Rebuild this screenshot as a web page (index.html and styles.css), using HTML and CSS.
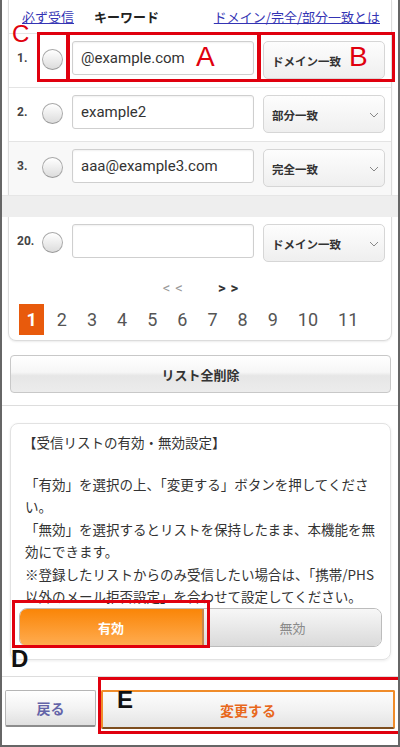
FILE: index.html
```html
<!DOCTYPE html>
<html lang="ja">
<head>
<meta charset="UTF-8">
<meta name="viewport" content="width=device-width, initial-scale=1">
<title>受信リスト設定</title>
<link rel="stylesheet" href="styles.css">
</head>
<body>
<div class="page">
  <div class="list-box">
    <div class="list-head">
      <a href="#" class="link">必ず受信</a>
      <span class="head-key">キーワード</span>
      <a href="#" class="link link-right">ドメイン/完全/部分一致とは</a>
    </div>

    <div class="row">
      <span class="num">1.</span>
      <span class="radio"></span>
      <input class="field" type="text" value="@example.com">
      <div class="select">ドメイン一致</div>
    </div>
    <div class="row">
      <span class="num">2.</span>
      <span class="radio"></span>
      <input class="field" type="text" value="example2">
      <div class="select">部分一致
        <svg class="chev" width="10" height="6" viewBox="0 0 10 6"><path d="M1 1 L5 5 L9 1" fill="none" stroke="#888" stroke-width="1"/></svg>
      </div>
    </div>
    <div class="row row-alt">
      <span class="num">3.</span>
      <span class="radio"></span>
      <input class="field" type="text" value="aaa@example3.com">
      <div class="select">完全一致
        <svg class="chev" width="10" height="6" viewBox="0 0 10 6"><path d="M1 1 L5 5 L9 1" fill="none" stroke="#888" stroke-width="1"/></svg>
      </div>
    </div>

    <div class="cut"></div>

    <div class="row row-last">
      <span class="num">20.</span>
      <span class="radio"></span>
      <input class="field" type="text" value="">
      <div class="select">ドメイン一致
        <svg class="chev" width="10" height="6" viewBox="0 0 10 6"><path d="M1 1 L5 5 L9 1" fill="none" stroke="#888" stroke-width="1"/></svg>
      </div>
    </div>

    <div class="pager-arrows">
      <span class="prev">&lt;&lt;</span>
      <span class="next">&gt;&gt;</span>
    </div>
    <div class="pages">
      <span class="pg current">1</span>
      <span class="pg">2</span>
      <span class="pg">3</span>
      <span class="pg">4</span>
      <span class="pg">5</span>
      <span class="pg">6</span>
      <span class="pg">7</span>
      <span class="pg">8</span>
      <span class="pg">9</span>
      <span class="pg">10</span>
      <span class="pg">11</span>
    </div>
  </div>

  <button class="btn btn-clear">リスト全削除</button>

  <hr class="divider divider-top">

  <div class="setting-box">
    <p class="setting-title">【受信リストの有効・無効設定】</p>
    <p class="note">「有効」を選択の上、「変更する」ボタンを押してください。</p>
    <p class="note">「無効」を選択するとリストを保持したまま、本機能を無効にできます。</p>
    <p class="note">※登録したリストからのみ受信したい場合は、「携帯/PHS以外のメール拒否設定」を合わせて設定してください。</p>
    <div class="toggle">
      <span class="toggle-on">有効</span>
      <span class="toggle-off">無効</span>
    </div>
  </div>

  <hr class="divider divider-bottom">

  <div class="actions">
    <button class="btn btn-back">戻る</button>
    <button class="btn btn-submit">変更する</button>
  </div>

  <!-- annotation marks -->
  <div class="mark box-c"></div>
  <div class="mark box-a"></div>
  <div class="mark box-b"></div>
  <div class="mark box-d"></div>
  <div class="mark box-e"></div>
  <span class="tag tag-red tag-c">C</span>
  <span class="tag tag-red tag-a">A</span>
  <span class="tag tag-red tag-b">B</span>
  <span class="tag tag-black tag-d">D</span>
  <span class="tag tag-black tag-e">E</span>
</div>
</body>
</html>
```

FILE: styles.css
```css
html, body {
  margin: 0;
  padding: 0;
  background: #fff;
}
body {
  font-family: Roboto, "Noto Sans CJK JP", sans-serif;
  color: #333;
}
.page {
  position: relative;
  width: 400px;
  height: 747px;
  box-sizing: border-box;
  border: solid #666;
  border-width: 0 2px 2px 2px;
  overflow: hidden;
}

/* list */
.list-box {
  margin: 0 6px;
  border: 1px solid #dcdcdc;
  border-top: none;
  border-radius: 0 0 8px 8px;
  padding-bottom: 5px;
  box-shadow: 0 1px 2px rgba(0, 0, 0, .08);
}
.list-head {
  display: flex;
  align-items: center;
  height: 33px;
  padding: 0 11px 0 13px;
  font-family: "Noto Sans CJK JP", sans-serif;
  font-size: 13px;
}
.link { color: #3434b4; text-decoration: underline; }
.head-key { margin-left: 20px; color: #222; font-weight: bold; }
.link-right { margin-left: auto; }

.row {
  display: grid;
  grid-template-columns: 25px 21px 191px 131px;
  padding: 7px 6px 8px 8px;
  border-top: 1px solid #e4e4e4;
  align-items: start;
}
.row-alt { background: #f8f8f8; }
.row-last { border-top: none; }
.num {
  line-height: 34px;
  font-size: 12px;
  font-weight: bold;
  color: #444;
}
.radio {
  margin-top: 8px;
  width: 21px;
  height: 21px;
  box-sizing: border-box;
  border: 1px solid #a9a9a9;
  border-bottom-color: #999;
  border-radius: 50%;
  background: linear-gradient(#ffffff, #dcdcdc);
  box-shadow: inset 0 1px 1px #fff;
}
.field {
  margin: 0 0 0 9px;
  width: 182px;
  height: 34px;
  box-sizing: border-box;
  border: 1px solid #cfcfcf;
  border-radius: 3px;
  padding: 0 8px;
  font-family: Roboto, "Noto Sans CJK JP", sans-serif;
  font-size: 15px;
  color: #333;
  background: #fff;
  box-shadow: inset 0 1px 2px rgba(0, 0, 0, .06);
}
.select {
  margin-left: 9px;
  width: 122px;
  height: 38px;
  box-sizing: border-box;
  display: flex;
  align-items: center;
  justify-content: space-between;
  padding: 2px 5px 0 8px;
  border: 1px solid #d6d6d6;
  border-radius: 5px;
  background: linear-gradient(#fdfdfd, #efefef);
  font-family: "Noto Sans CJK JP", sans-serif;
  font-size: 11.5px;
  font-weight: bold;
  color: #333;
}
.cut {
  margin: 0 -7px;
  height: 21px;
  background: #eeeeee;
  border-top: 1px solid #e6e6e6;
}

.pager-arrows {
  display: flex;
  justify-content: center;
  gap: 30px;
  margin-top: 10px;
  height: 16px;
  font-size: 15px;
  font-weight: bold;
  line-height: 16px;
  letter-spacing: 5px;
  padding-left: 6px;
}
.prev { color: #9a9a9a; font-weight: normal; }
.next { color: #333; }
.pages {
  display: flex;
  gap: 5px;
  margin-top: 8px;
  padding-left: 10px;
}
.pg {
  padding: 0 7.5px;
  height: 31px;
  line-height: 31px;
  font-size: 18px;
  color: #555;
}
.pg.current {
  background: #e85a0c;
  color: #fff;
  font-weight: bold;
}

/* buttons */
.btn {
  display: block;
  box-sizing: border-box;
  font-family: "Noto Sans CJK JP", sans-serif;
  font-weight: bold;
  cursor: pointer;
}
.btn-clear {
  margin: 14px 7px 0 8px;
  width: calc(100% - 15px);
  height: 38px;
  border: 1px solid #c8c8c8;
  border-radius: 4px;
  background: linear-gradient(#ffffff 0%, #f6f6f6 45%, #e6e6e6 55%, #ececec 100%);
  font-size: 13px;
  color: #333;
}
.divider {
  border: none;
  border-top: 1px solid #dddddd;
  margin: 0;
}
.divider-top { margin-top: 12px; }
.divider-bottom { margin-top: 16px; }

/* setting */
.setting-box {
  margin: 17px 7px 0 8px;
  border: 1px solid #e2e2e2;
  border-radius: 8px;
  padding: 7px 0 12px;
  box-shadow: 0 1px 3px rgba(0, 0, 0, .08);
  font-family: "Noto Sans CJK JP", sans-serif;
  font-size: 13.5px;
  line-height: 22px;
  color: #333;
}
.setting-title {
  margin: 0 0 20px;
  padding: 0 12px;
  font-size: 13.5px;
}
.note {
  margin: 0 0 1px;
  padding: 0 13px 0 14px;
}
.toggle {
  display: flex;
  margin: 1px 8px 0;
  height: 37px;
  border: 1px solid #bcbcbc;
  border-radius: 8px;
  overflow: hidden;
  font-size: 13px;
}
.toggle-on {
  width: 182px;
  display: flex;
  align-items: center;
  justify-content: center;
  background: linear-gradient(#fa8507, #ffad52);
  border-right: 2px solid #c7854a;
  color: #fff;
  font-weight: bold;
}
.toggle-off {
  flex: 1;
  display: flex;
  align-items: center;
  justify-content: center;
  background: linear-gradient(#f7f7f7, #dadada);
  color: #8a8a8a;
}

.actions {
  display: flex;
  gap: 5px;
  margin: 13px 3px 0 3px;
}
.btn-back {
  width: 91px;
  height: 37px;
  border: 1px solid #b5b5b5;
  border-bottom: 2px solid #8c8c8c;
  border-radius: 2px;
  background: linear-gradient(#ffffff 0%, #f3f3f3 50%, #e0e0e0 100%);
  font-size: 14px;
  color: #6464a8;
}
.btn-submit {
  flex: 1;
  height: 39px;
  border: 2px solid #f08c2a;
  border-bottom-color: #7d4d1e;
  border-radius: 2px;
  background: linear-gradient(#fcfcfc 0%, #f2f2f2 50%, #e4e4e4 100%);
  font-size: 14px;
  color: #e8681c;
}

/* annotation marks */
.mark {
  position: absolute;
  box-sizing: border-box;
  border: 3px solid #e0000e;
}
.box-c { left: 35px; top: 32px; width: 32px; height: 50px; }
.box-a { left: 65px; top: 32px; width: 193px; height: 50px; }
.box-b { left: 256px; top: 32px; width: 137px; height: 50px; }
.box-d { left: 10px; top: 600px; width: 198px; height: 48px; }
.box-e { left: 96px; top: 677px; width: 303px; height: 57px; }
.tag {
  position: absolute;
  font-family: "Liberation Sans", Arial, sans-serif;
  line-height: 1;
}
.tag-red { color: #e0000e; }
.tag-black { color: #111; font-weight: bold; font-size: 24px; }
.tag-c { left: 10px; top: 22px; font-size: 24px; }
.tag-a { left: 194px; top: 43px; font-size: 28px; }
.tag-b { left: 347px; top: 43px; font-size: 28px; }
.tag-d { left: 9px; top: 647px; }
.tag-e { left: 115px; top: 688px; }
```
